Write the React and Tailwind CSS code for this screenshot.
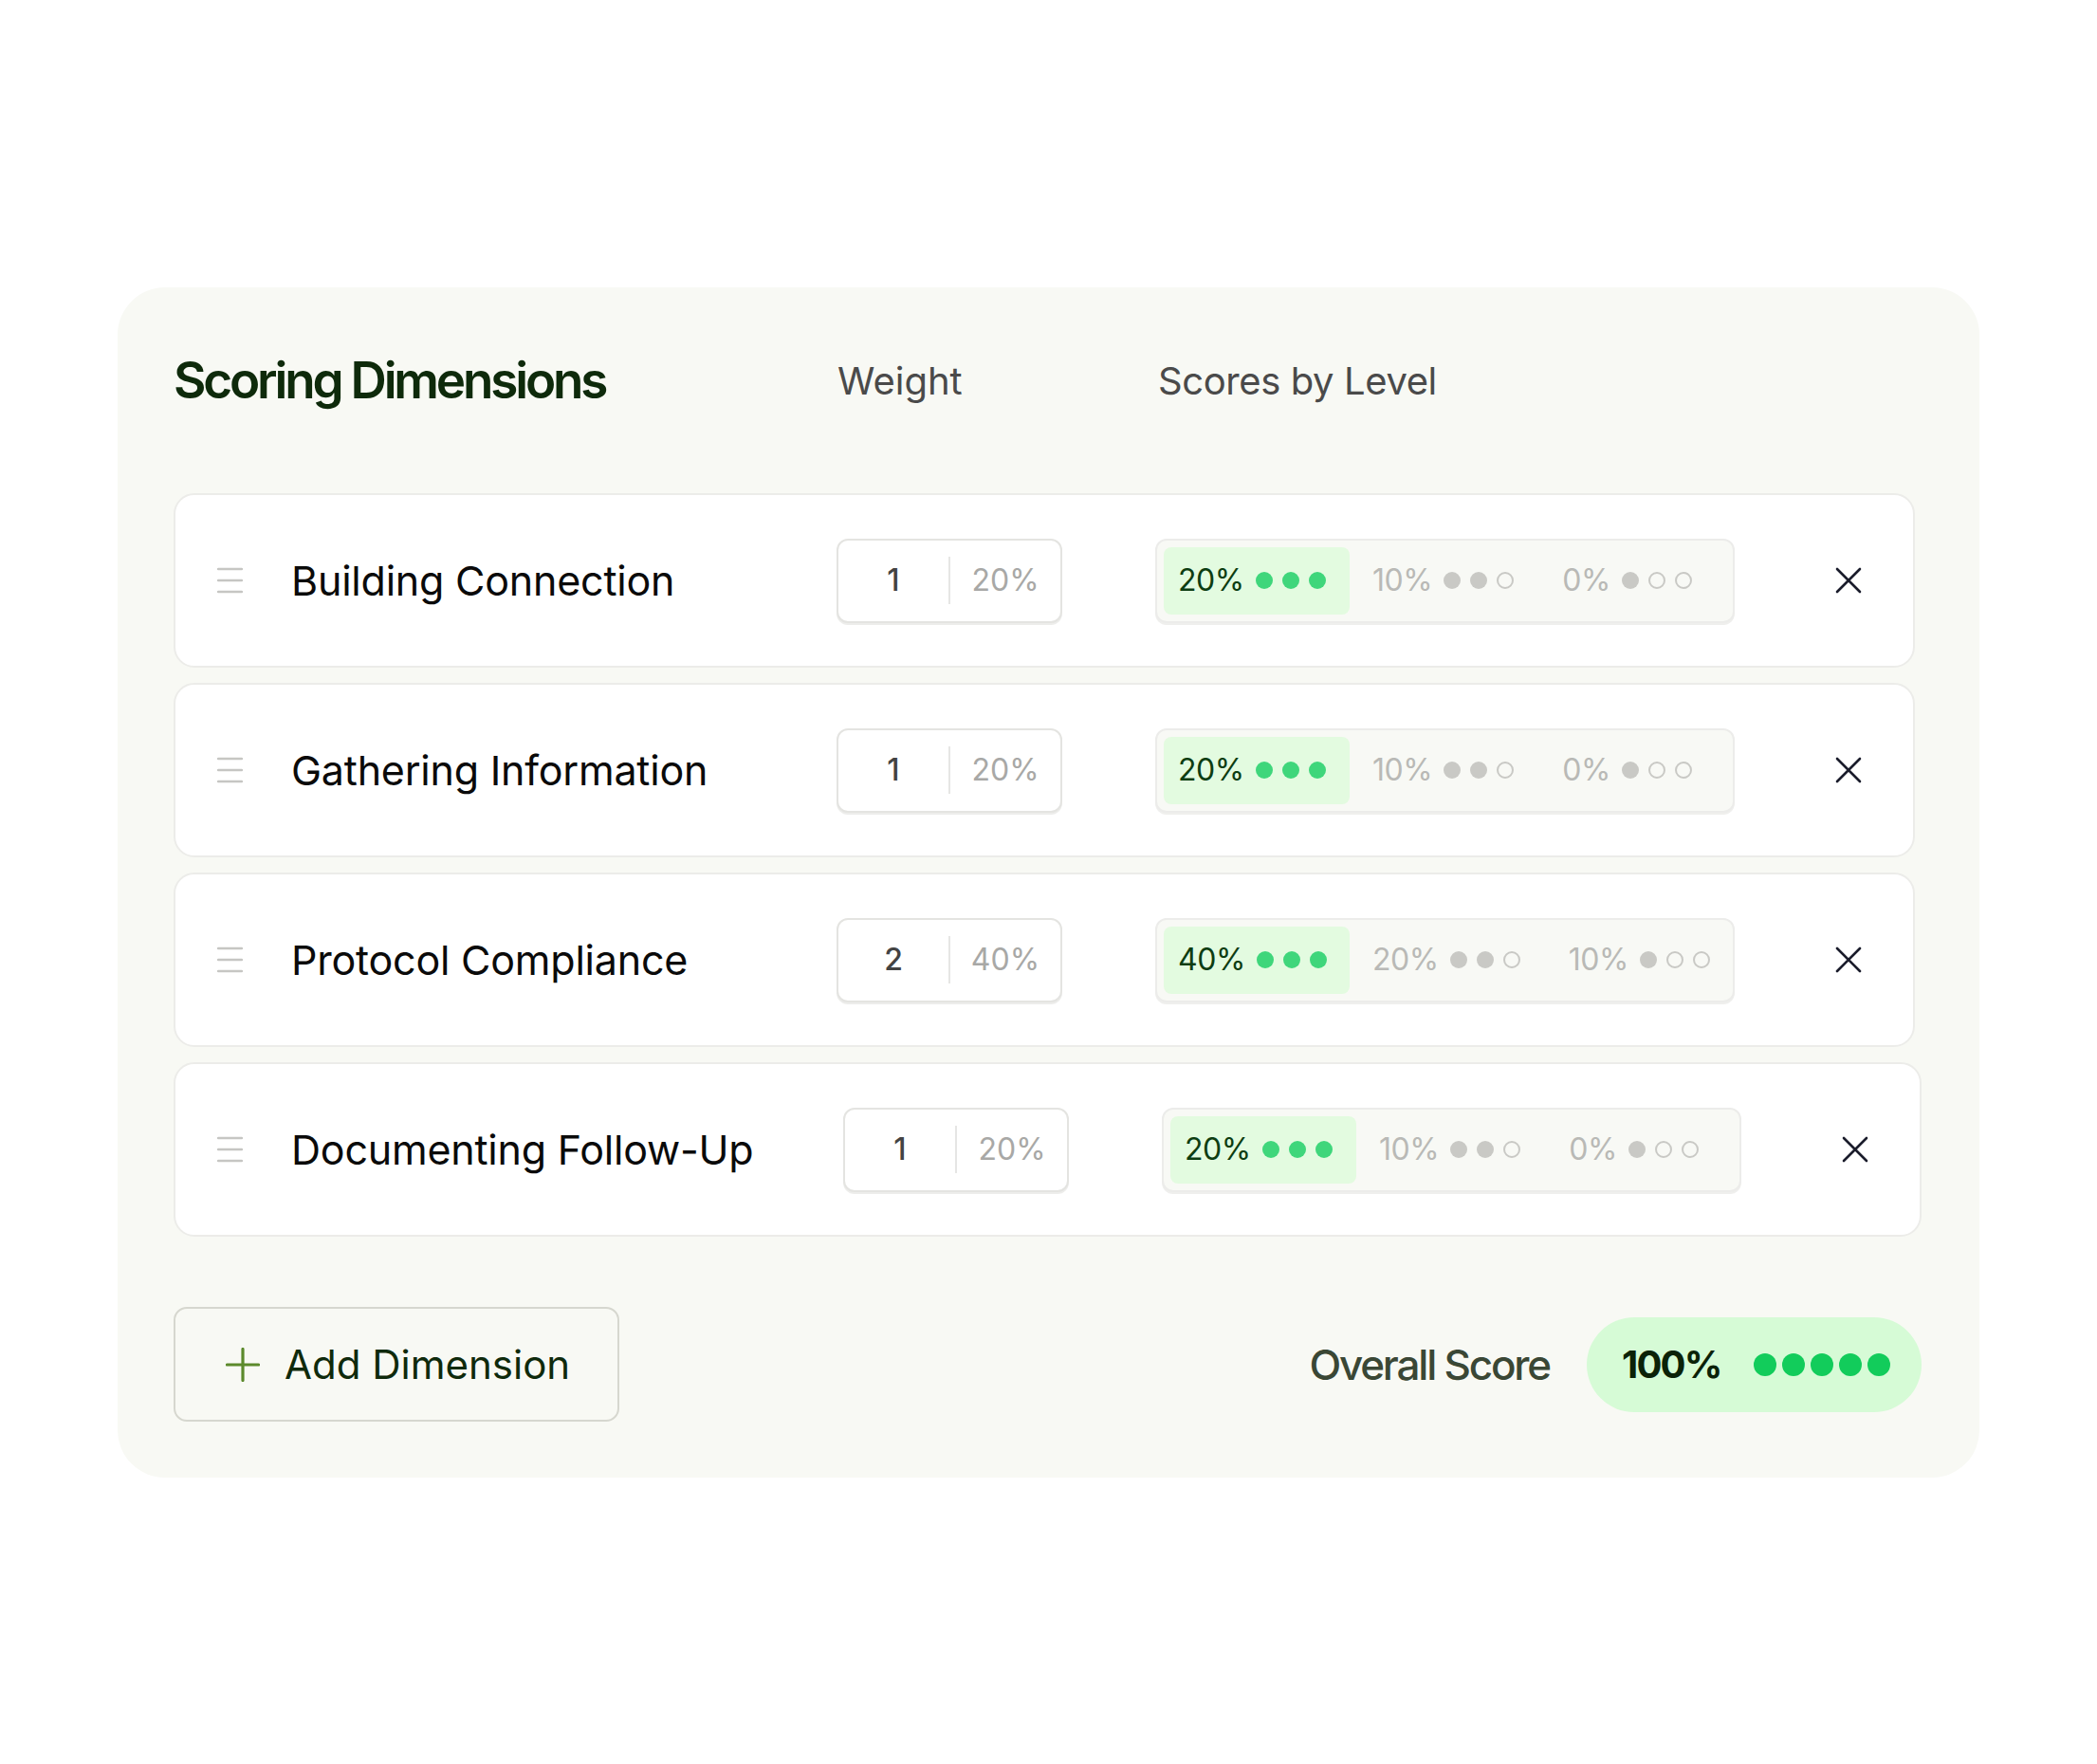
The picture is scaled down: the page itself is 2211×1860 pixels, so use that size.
import React from 'react';

const dimensions = [
  { id: 1, name: 'Building Connection', weight: 1, share: '20%', levels: ['20%', '10%', '0%'] },
  { id: 2, name: 'Gathering Information', weight: 1, share: '20%', levels: ['20%', '10%', '0%'] },
  { id: 3, name: 'Protocol Compliance', weight: 2, share: '40%', levels: ['40%', '20%', '10%'] },
  { id: 4, name: 'Documenting Follow-Up', weight: 1, share: '20%', levels: ['20%', '10%', '0%'] },
];

function GripIcon() {
  return (
    <svg width="27" height="28" viewBox="0 0 27 28" fill="none" className="shrink-0">
      <path d="M1 2h25M1 14h25M1 26h25" stroke="#c6c6c3" strokeWidth="2.5" strokeLinecap="round" />
    </svg>
  );
}

function CloseIcon() {
  return (
    <svg width="28" height="28" viewBox="0 0 28 28" fill="none">
      <path d="M2 2l24 24M26 2L2 26" stroke="#1a1c2b" strokeWidth="2.6" strokeLinecap="round" />
    </svg>
  );
}

function PlusIcon() {
  return (
    <svg width="36" height="36" viewBox="0 0 36 36" fill="none" className="shrink-0">
      <path d="M18 1.5v33M1.5 18h33" stroke="#5c8a2c" strokeWidth="3.2" strokeLinecap="round" />
    </svg>
  );
}

// three dots per level: filled ones first, the rest as rings
function LevelDots({ filled, active }) {
  return (
    <div className="flex items-center gap-[10px]">
      {[0, 1, 2].map((i) =>
        i < filled ? (
          <span
            key={i}
            className={`block w-[18px] h-[18px] rounded-full ${active ? 'bg-[#3fd67b]' : 'bg-[#c9c9c5]'}`}
          />
        ) : (
          <span key={i} className="block w-[18px] h-[18px] rounded-full border-2 border-[#c9c9c5]" />
        )
      )}
    </div>
  );
}

function WeightBox({ weight, share }) {
  return (
    <div className="flex items-center w-[238px] h-[89px] shrink-0 rounded-[12px] border-2 border-[#e4e4e1] bg-white shadow-[0_2px_0_#ededeb]">
      <div className="w-[116px] text-center text-[32px] leading-none font-medium text-[#434343]">{weight}</div>
      <div className="w-[2px] h-[50px] bg-[#e6e6e4]" />
      <div className="flex-1 text-center text-[32px] leading-none text-[#a8a8a6]">{share}</div>
    </div>
  );
}

// first level is the highlighted one; the others sit on the plain track
const segmentClass = [
  'w-[196px] shrink-0 pl-[15px] bg-[#e3fbe0]',
  'shrink-0 pl-[24px] pr-[27px]',
  'flex-1 pl-[24px]',
];

function ScoreBox({ levels }) {
  return (
    <div className="flex items-stretch w-[611px] h-[89px] shrink-0 p-[7px] rounded-[12px] border-2 border-[#ececea] bg-[#f8f9f5] shadow-[0_2px_0_#efefed]">
      {levels.map((label, i) => (
        <div key={i} className={`flex items-center gap-[12px] rounded-[8px] ${segmentClass[i]}`}>
          <span
            className={`text-[32px] leading-none tracking-[-0.015em] ${i === 0 ? 'text-[#0d3d12]' : 'text-[#b9b9b6]'}`}
          >
            {label}
          </span>
          <LevelDots filled={3 - i} active={i === 0} />
        </div>
      ))}
    </div>
  );
}

function DimensionRow({ dim, wide }) {
  return (
    <div
      className={`flex items-center h-[184px] rounded-[22px] border-2 border-[#ecece9] bg-white pl-[44px] pr-[54px] ${
        wide ? 'w-[1843px]' : 'w-[1836px]'
      }`}
    >
      <GripIcon />
      <span className="ml-[51px] flex-1 text-[43px] leading-none text-[#0a0a0a] tracking-[-0.005em]">{dim.name}</span>
      <WeightBox weight={dim.weight} share={dim.share} />
      <div className="ml-[98px]">
        <ScoreBox levels={dim.levels} />
      </div>
      <button className="ml-[106px] flex items-center justify-center">
        <CloseIcon />
      </button>
    </div>
  );
}

export default function App() {
  return (
    <div className="min-h-[1860px] bg-white pt-[303px] pl-[124px] font-['Inter',sans-serif]">
      <div className="w-[1963px] rounded-[50px] bg-[#f8f9f4] px-[59px] pt-[72px] pb-[59px]">
        {/* Column headings */}
        <div className="flex items-center">
          <h2 className="w-[700px] text-[53px] leading-none font-semibold tracking-[-0.06em] text-[#0e2a0b]">
            Scoring Dimensions
          </h2>
          <span className="w-[338px] text-[40px] leading-none text-[#4a4a4a]">Weight</span>
          <span className="text-[40px] leading-none tracking-[-0.01em] text-[#4a4a4a]">Scores by Level</span>
        </div>

        {/* Dimension rows */}
        <div className="mt-[92px] flex flex-col gap-[16px]">
          {dimensions.map((dim, i) => (
            <DimensionRow key={dim.id} dim={dim} wide={i === dimensions.length - 1} />
          ))}
        </div>

        {/* Footer */}
        <div className="mt-[74px] flex items-center justify-between w-[1843px]">
          <button className="flex items-center w-[470px] h-[121px] rounded-[14px] border-2 border-[#d6d7cf] pl-[53px]">
            <PlusIcon />
            <span className="ml-[26px] text-[42px] leading-none text-[#0f2a0c]">Add Dimension</span>
          </button>
          <div className="flex items-center">
            <span className="text-[44px] leading-none font-medium tracking-[-0.05em] text-[#3a4735]">Overall Score</span>
            <div className="ml-[39px] flex items-center h-[100px] w-[353px] rounded-full bg-[#d6fbd6] pl-[37px]">
              <span className="text-[40px] leading-none font-bold tracking-[-0.045em] text-[#0b2208]">100%</span>
              <div className="ml-[34px] flex items-center gap-[6px]">
                {[0, 1, 2, 3, 4].map((i) => (
                  <span key={i} className="block w-[24px] h-[24px] rounded-full bg-[#12cc5b]" />
                ))}
              </div>
            </div>
          </div>
        </div>
      </div>
    </div>
  );
}
